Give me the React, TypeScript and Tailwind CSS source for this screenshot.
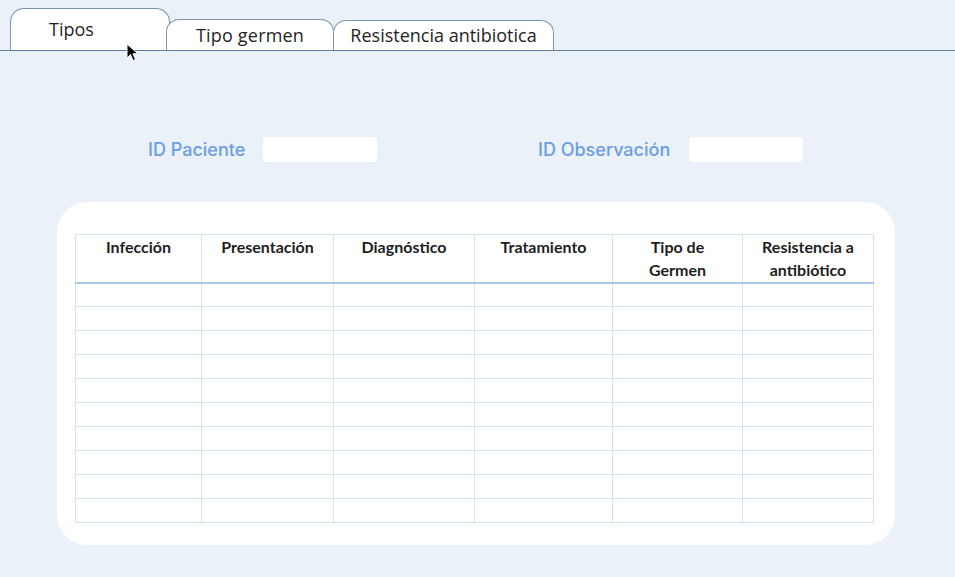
import React from "react";

const columns = [
  { label: ["Infección"], width: 126 },
  { label: ["Presentación"], width: 132 },
  { label: ["Diagnóstico"], width: 141 },
  { label: ["Tratamiento"], width: 138 },
  { label: ["Tipo de", "Germen"], width: 130 },
  { label: ["Resistencia a", "antibiótico"], width: 131 },
];

const rows = Array.from({ length: 10 }, (_, i) => i);

const Cursor = () => (
  <svg
    className="absolute left-[126px] top-[43px]"
    width="16"
    height="20"
    viewBox="0 0 16 20"
  >
    <path
      d="M1 1 L1 15 L4.5 11.5 L7 17.5 L9.5 16.5 L7 10.8 L12 10.8 Z"
      fill="#000"
      stroke="#fff"
      strokeWidth="1"
      strokeLinejoin="round"
    />
  </svg>
);

const App = () => {
  return (
    <div className="relative h-[577px] w-full overflow-hidden bg-[#eaf1f8] font-['Open_Sans',sans-serif]">
      <div className="flex h-[51px] items-end border-b border-[#5d7d9a] pl-[10px]">
        <div className="h-[42px] w-[160px] rounded-t-[14px] border border-b-0 border-[#7b95ad] bg-white pl-[38px] pt-[7px] text-[18px] text-[#1f1f1f]">
          Tipos
        </div>
        <div className="-ml-[4px] flex h-[31px] w-[168px] items-center justify-center rounded-t-[13px] border border-b-0 border-[#7b95ad] bg-white text-[18px] tracking-[0.2px] text-[#1f1f1f]">
          Tipo germen
        </div>
        <div className="-ml-px flex h-[30px] w-[221px] items-center justify-center rounded-t-[13px] border border-b-0 border-[#7b95ad] bg-white text-[18px] text-[#1f1f1f]">
          Resistencia antibiotica
        </div>
      </div>
      <Cursor />

      <div className="mt-[85px] flex items-center pl-[148px] font-['Inter',sans-serif] text-[18px] font-medium text-[#6c9de2]">
        <div className="flex w-[390px] items-center">
          <span className="w-[115px]">ID Paciente</span>
          <div className="h-[25px] w-[114px] rounded-[4px] bg-white" />
        </div>
        <div className="flex items-center">
          <span className="w-[151px]">ID Observación</span>
          <div className="h-[25px] w-[114px] rounded-[4px] bg-white" />
        </div>
      </div>

      <div className="ml-[57px] mt-[39px] h-[343px] w-[838px] rounded-[30px] bg-white px-[18px] pt-[32px]">
        <table className="w-[798px] table-fixed border-collapse font-['Lato',sans-serif]">
          <colgroup>
            {columns.map((c) => (
              <col key={c.label.join()} style={{ width: c.width }} />
            ))}
          </colgroup>
          <thead>
            <tr className="h-[48px] border-b-2 border-[#a8c7ea]">
              {columns.map((c) => (
                <th
                  key={c.label.join()}
                  className="border-x border-t border-[#d3e2f4] align-top text-[16px] font-bold leading-[23px] text-[#1e1e1e]"
                >
                  {c.label.map((l) => (
                    <div key={l}>{l}</div>
                  ))}
                </th>
              ))}
            </tr>
          </thead>
          <tbody>
            {rows.map((r) => (
              <tr key={r} className="h-[24px]">
                {columns.map((c) => (
                  <td
                    key={c.label.join()}
                    className="border border-[#d3e2f4]"
                  />
                ))}
              </tr>
            ))}
          </tbody>
        </table>
      </div>
    </div>
  );
};

export default App;
